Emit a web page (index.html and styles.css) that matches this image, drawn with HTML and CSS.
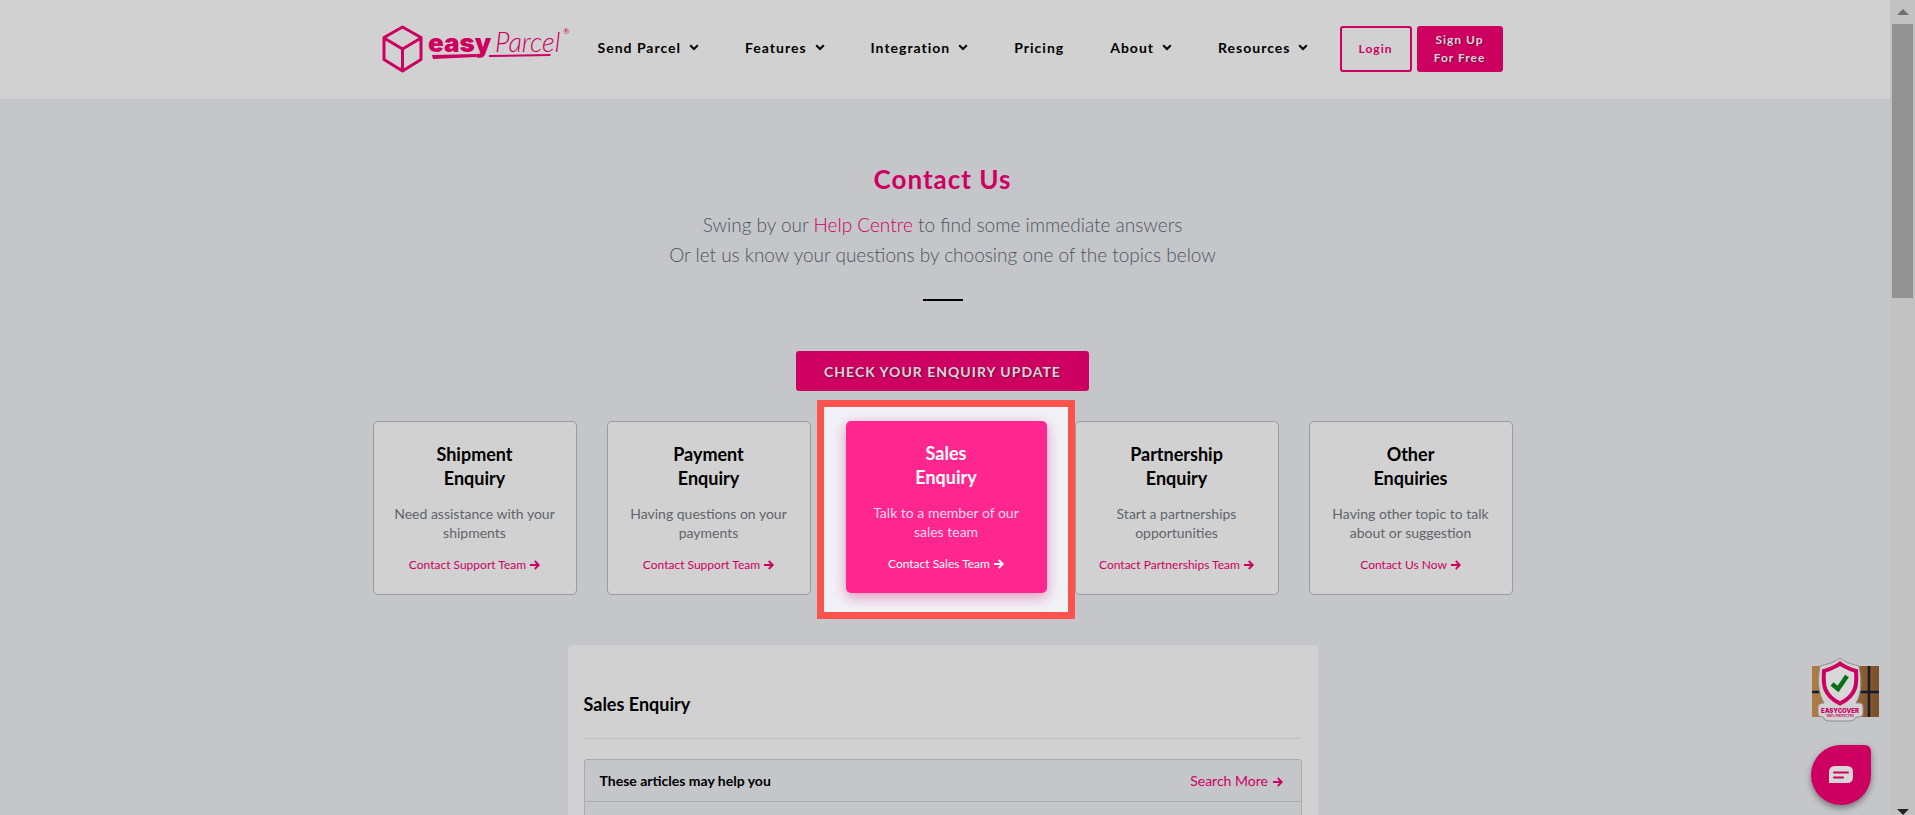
FILE: index.html
```html
<!DOCTYPE html>
<html lang="en">
<head>
    <meta charset="UTF-8">
    <meta name="viewport" content="width=device-width, initial-scale=1.0">
    <title>Contact Us - EasyParcel</title>
    <link rel="stylesheet" href="styles.css">
</head>
<body>
    <svg class="sprite" aria-hidden="true">
        <symbol id="chevron" viewBox="0 0 10 7">
            <path d="M1.200 1.200 5 5l3.800-3.800" fill="none" stroke="currentColor" stroke-width="2"/>
        </symbol>
        <symbol id="arrow" viewBox="0 0 10 10">
            <path d="M0 5h8.500M4.800 1l4 4-4 4" fill="none" stroke="currentColor" stroke-width="1.800"/>
        </symbol>
    </svg>

    <div class="page">
        <header class="header">
            <div class="container header-inner">
                <a href="#" class="logo" aria-label="easyParcel">
                    <svg width="190" height="48" viewBox="0 0 190 48">
                        <path d="M20.500 2 39 12.500v22L20.500 46 2 34.500v-22zM2 13l18.500 11L39 13M20.500 24v22" fill="none" stroke="#cd0062" stroke-width="3" stroke-linejoin="round"/>
                        <text class="logo-easy" x="46" y="27">easy</text>
                        <text class="logo-parcel" x="113" y="27">Parcel</text>
                        <text class="logo-mark" x="181" y="9">®</text>
                        <path d="M50 30l45-1-1 3-43 2zM107 30l62-1-1 2-61 1z" fill="#cd0062"/>
                    </svg>
                </a>
                <nav class="nav">
                    <a href="#">Send Parcel <svg class="chevron"><use href="#chevron"/></svg></a>
                    <a href="#">Features <svg class="chevron"><use href="#chevron"/></svg></a>
                    <a href="#">Integration <svg class="chevron"><use href="#chevron"/></svg></a>
                    <a href="#">Pricing</a>
                    <a href="#">About <svg class="chevron"><use href="#chevron"/></svg></a>
                    <a href="#">Resources <svg class="chevron"><use href="#chevron"/></svg></a>
                </nav>
                <div class="account">
                    <button class="btn-login">Login</button>
                    <button class="btn-signup">Sign Up<br>For Free</button>
                </div>
            </div>
        </header>

        <main class="container">
            <section class="intro">
                <h1>Contact Us</h1>
                <p>Swing by our <a href="#">Help Centre</a> to find some immediate answers<br>
                Or let us know your questions by choosing one of the topics below</p>
                <hr class="divider">
                <button class="btn-update">CHECK YOUR ENQUIRY UPDATE</button>
            </section>

            <section class="topics">
                <div class="card">
                    <h2>Shipment<br>Enquiry</h2>
                    <p>Need assistance with your shipments</p>
                    <a href="#">Contact Support Team <svg class="arrow"><use href="#arrow"/></svg></a>
                </div>
                <div class="card">
                    <h2>Payment<br>Enquiry</h2>
                    <p>Having questions on your payments</p>
                    <a href="#">Contact Support Team <svg class="arrow"><use href="#arrow"/></svg></a>
                </div>
                <div class="active-topic">
                    <div class="spotlight">
                        <div class="card card-active">
                            <h2>Sales<br>Enquiry</h2>
                            <p>Talk to a member of our sales team</p>
                            <a href="#">Contact Sales Team <svg class="arrow"><use href="#arrow"/></svg></a>
                        </div>
                    </div>
                </div>
                <div class="card">
                    <h2>Partnership<br>Enquiry</h2>
                    <p>Start a partnerships opportunities</p>
                    <a href="#">Contact Partnerships Team <svg class="arrow"><use href="#arrow"/></svg></a>
                </div>
                <div class="card">
                    <h2>Other<br>Enquiries</h2>
                    <p>Having other topic to talk about or suggestion</p>
                    <a href="#">Contact Us Now <svg class="arrow"><use href="#arrow"/></svg></a>
                </div>
            </section>

            <section class="panel">
                <h2>Sales Enquiry</h2>
                <div class="articles">
                    <div class="articles-head">
                        <strong>These articles may help you</strong>
                        <a href="#">Search More <svg class="arrow"><use href="#arrow"/></svg></a>
                    </div>
                </div>
            </section>
        </main>
    </div>

    <div class="widgets">
        <a href="#" class="cover" aria-label="EasyCover">
            <svg width="68" height="68" viewBox="0 0 68 68">
                <defs>
                    <linearGradient id="box">
                        <stop offset="0" stop-color="#b07c45"/>
                        <stop offset="0.700" stop-color="#8f5f33"/>
                        <stop offset="1" stop-color="#7b4f2a"/>
                    </linearGradient>
                </defs>
                <path fill="url(#box)" d="M1 9h67v51H1z"/>
                <path d="M1 35h67M58 9v51" stroke="#141c2c" stroke-width="2.500"/>
                <path class="cover-plate" d="M29 1c6 5 12 6 19 8 2 12 4 25-3 37h4q3 0 3 4v7q0 3-4 3h-3q-1 4-6 4H18q-5 0-6-4-5 0-5-4v-6q0-4 6-4C6 34 7 21 9 9c7-2 14-3 20-8z"/>
                <path d="M29 6.500c5 4 10 5.500 16 7.500 1 13 1 24-16 32.500C12 38 12 27 13 14 19 12 24 10.500 29 6.500z" fill="#d8d8d8" stroke="#cd0062" stroke-width="4"/>
                <path d="m21 27 6 5 9-13" fill="none" stroke="#067016" stroke-width="4.500"/>
                <text class="cover-name" x="29" y="56">EASYCOVER</text>
                <text class="cover-note" x="29" y="60">100% PROTECTED</text>
            </svg>
        </a>
        <button class="chat" aria-label="Chat">
            <svg width="24" height="18" viewBox="0 0 24 18">
                <path d="M6 0h12q6 0 6 6v5q0 6-6 6H0V6q0-6 6-6z" fill="#d8d8d8"/>
                <path d="M5 6.500h14M5 11.500h9" stroke="#cd0062" stroke-width="2" stroke-linecap="round"/>
            </svg>
        </button>
    </div>

    <div class="scrollbar" aria-hidden="true">
        <span class="scroll-up"></span>
        <span class="scroll-thumb"></span>
        <span class="scroll-down"></span>
    </div>
</body>
</html>
```

FILE: styles.css
```css
* {
    box-sizing: border-box;
}
body {
    margin: 0;
    height: 100vh;
    overflow: hidden;
    display: grid;
    grid-template-columns: 1fr 25px;
    font-family: Lato, "Open Sans", sans-serif;
    font-size: 14px;
    color: #000;
    background: #c5c6ca;
}
h1, h2, p {
    margin: 0;
}
a {
    color: #cd0062;
    text-decoration: none;
}
button {
    font-family: inherit;
    font-weight: bold;
    letter-spacing: 1px;
    padding: 0;
    border-radius: 3px;
    cursor: pointer;
}
.sprite {
    position: absolute;
    width: 0;
    height: 0;
}
.page {
    min-width: 0;
    height: 100vh;
    overflow: hidden;
}
.container {
    width: 100%;
    max-width: 1145px;
    margin: 0 auto;
    padding-right: 5px;
}

/* header */
.header {
    background: #d1d1d1;
}
.header-inner {
    display: flex;
    align-items: center;
    min-height: 99px;
    padding-left: 9px;
    padding-bottom: 2px;
}
.logo {
    display: flex;
}
.logo text {
    fill: #cd0062;
}
.logo-easy {
    font: 900 26px Inter, sans-serif;
}
.logo-parcel {
    font: italic 300 27px Lato, sans-serif;
}
.logo-mark {
    font: 8px Lato, sans-serif;
}
.nav {
    display: flex;
    gap: 46px;
    margin-left: 26px;
    padding-bottom: 2px;
}
.nav a {
    display: flex;
    align-items: center;
    gap: 8px;
    color: #000;
    font-weight: bold;
    letter-spacing: 1px;
    white-space: nowrap;
}
.chevron {
    width: 10px;
    height: 7px;
}
.account {
    display: flex;
    gap: 5px;
    margin-left: auto;
    margin-right: 10px;
}
.account button {
    height: 46px;
    font-size: 12px;
    line-height: 18px;
}
.btn-login {
    width: 72px;
    border: 2px solid #cd0062;
    background: none;
    color: #cd0062;
}
.btn-signup, .btn-update {
    border: none;
    background: #cd0062;
    color: #d8d8d8;
    text-shadow: 1px 1px 2px rgba(0, 0, 0, 0.4);
}
.btn-signup {
    width: 86px;
}

/* intro */
.intro {
    display: flex;
    flex-direction: column;
    align-items: center;
    padding-top: 64px;
    text-align: center;
}
.intro h1 {
    font-size: 26px;
    line-height: 32px;
    letter-spacing: 1px;
    color: #cd0062;
}
.intro p {
    margin-top: 15px;
    font-size: 19px;
    font-weight: 300;
    line-height: 30px;
    color: #4d545c;
}
.divider {
    width: 40px;
    margin: 29px 0 50px;
    border: 0;
    border-top: 2px solid #000;
}
.btn-update {
    width: 293px;
    height: 40px;
    font-size: 14px;
}

/* topics */
.topics {
    display: grid;
    grid-template-columns: repeat(5, 1fr);
    gap: 30px;
    margin-top: 30px;
}
.card {
    padding: 20px 16px 19px;
    border: 1px solid #9b9b9c;
    border-radius: 5px;
    background: #d1d1d1;
    text-align: center;
}
.card h2 {
    font-size: 18px;
    line-height: 24px;
}
.card p {
    margin: 14px 0 13px;
    line-height: 19px;
    color: #5f656b;
}
.card a {
    font-size: 12px;
    line-height: 20px;
    white-space: nowrap;
}
.arrow {
    width: 10px;
    height: 10px;
    margin-left: 1px;
    vertical-align: -1px;
}
.active-topic {
    position: relative;
}
.spotlight {
    position: absolute;
    inset: -21px -30px -24px -24px;
    padding: 14px 21px 19px 22px;
    border: 7px solid #fb544f;
    background: #f1f2f7;
    display: grid;
}
.card-active {
    padding-bottom: 18px;
    border: none;
    background: #ff268f;
    box-shadow: 0 4px 14px rgba(205, 0, 98, 0.4);
}
.card-active h2, .card-active p, .card-active a {
    color: #fff;
}
.card-active p {
    padding: 0 8px;
    color: #ffd9ec;
}

/* selected enquiry */
.panel {
    max-width: 750px;
    margin: 50px auto 0;
    padding: 47px 16px;
    border-radius: 4px;
    background: #d1d1d1;
}
.panel h2 {
    padding-bottom: 22px;
    border-bottom: 1px solid #bfbfbf;
    font-size: 18px;
    line-height: 24px;
}
.articles {
    min-height: 200px;
    margin-top: 20px;
    border: 1px solid #acacae;
    border-radius: 3px;
    background: #c5c6ca;
}
.articles-head {
    display: flex;
    justify-content: space-between;
    align-items: center;
    height: 42px;
    padding: 0 18px 0 15px;
    border-bottom: 1px solid #acacae;
}

/* floating widgets */
.widgets {
    position: fixed;
    right: 36px;
    bottom: 10px;
    display: flex;
    flex-direction: column;
    align-items: flex-end;
    gap: 20px;
}
.cover {
    display: flex;
}
.cover-plate {
    fill: #d1d1d1;
    stroke: #8d8d8d;
    stroke-width: 1px;
}
.cover text {
    fill: #cd0062;
    text-anchor: middle;
}
.cover-name {
    font: 900 6px Inter, sans-serif;
}
.cover-note {
    font: bold 3px Inter, sans-serif;
}
.chat {
    display: flex;
    align-items: center;
    justify-content: center;
    width: 60px;
    height: 60px;
    margin-right: 8px;
    border: none;
    border-radius: 50% 6px 50% 50%;
    background: #cd0062;
    box-shadow: 0 3px 6px rgba(0, 0, 0, 0.4);
}

/* scrollbar */
.scrollbar {
    display: flex;
    flex-direction: column;
    align-items: center;
    height: 100vh;
    padding-top: 9px;
    background: #c2c2c2;
}
.scroll-up {
    border: 6px solid transparent;
    border-top: 0;
    border-bottom-color: #707070;
}
.scroll-thumb {
    width: 21px;
    height: 34%;
    margin-top: 9px;
    background: #929292;
}
.scroll-down {
    margin-top: auto;
    border: 6px solid transparent;
    border-top-color: #222;
    border-bottom: 0;
}
```
